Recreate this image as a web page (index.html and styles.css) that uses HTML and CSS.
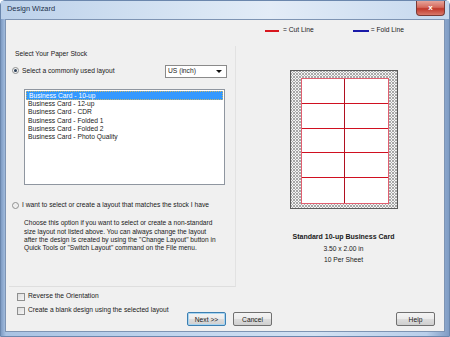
FILE: index.html
```html
<!DOCTYPE html>
<html>
<head>
<meta charset="utf-8">
<link rel="stylesheet" href="styles.css">
</head>
<body>
<div class="window">
  <div class="titlebar">
    <span class="title">Design Wizard</span>
    <span class="close">x</span>
  </div>
  <div class="client">
    <div class="legend">
      <span class="swatch red"></span><span class="ltext">= Cut Line</span>
      <span class="swatch blue"></span><span class="ltext">= Fold Line</span>
    </div>
    <div class="main">
      <div class="panel">
        <div class="heading">Select Your Paper Stock</div>
        <div class="row1">
          <label class="opt"><span class="radio on"></span>Select a commonly used layout</label>
          <div class="combo"><span>US (inch)</span><span class="arrow"></span></div>
        </div>
        <ul class="list">
          <li class="sel">Business Card - 10-up</li>
          <li>Business Card - 12-up</li>
          <li>Business Card - CDR</li>
          <li>Business Card - Folded 1</li>
          <li>Business Card - Folded 2</li>
          <li>Business Card - Photo Quality</li>
        </ul>
        <label class="opt opt2"><span class="radio"></span>I want to select or create a layout that matches the stock I have</label>
        <p class="desc">Choose this option if you want to select or create a non-standard size layout not listed above. You can always change the layout after the design is created by using the "Change Layout" button in Quick Tools or "Switch Layout" command on the File menu.</p>
      </div>
      <div class="preview">
        <div class="sheet">
          <div class="cards">
            <div></div><div></div><div></div><div></div><div></div>
            <div></div><div></div><div></div><div></div><div></div>
          </div>
        </div>
        <div class="cap">
          <div class="bold">Standard 10-up Business Card</div>
          <div>3.50 x 2.00 in</div>
          <div>10 Per Sheet</div>
        </div>
      </div>
    </div>
    <div class="bottom">
      <div class="checks">
        <label class="chk"><span class="box"></span>Reverse the Orientation</label>
        <label class="chk"><span class="box"></span>Create a blank design using the selected layout</label>
      </div>
      <div class="buttons">
        <button class="btn def">Next &gt;&gt;</button>
        <button class="btn">Cancel</button>
        <span class="spacer"></span>
        <button class="btn">Help</button>
      </div>
    </div>
  </div>
</div>
</body>
</html>
```
FILE: styles.css
```css
* { box-sizing: border-box; }
html, body { margin: 0; padding: 0; background: #ffffff; }
body {
  font-family: "Liberation Sans", Arial, sans-serif;
  font-size: 6.7px;
  line-height: 8.33px;
  color: #1a1a1a;
}
.window {
  width: 450px;
  height: 337px;
  display: flex;
  flex-direction: column;
  border-radius: 5px 5px 0 0;
  background: linear-gradient(90deg, #7f9cc4 0px, #a9c3e3 5px, #c2d6ee 40%, #d3e2f3 70%, #b9cfea 95%, #7f9cc4 100%);
  border: 1px solid #6b87ad;
}
.titlebar {
  height: 18px;
  flex: none;
  display: flex;
  align-items: flex-start;
  justify-content: space-between;
  padding-left: 6px;
  background: linear-gradient(90deg, #bcd1ea 0%, #d9e6f4 45%, #e3ecf7 60%, #c5d8ee 100%);
}
.title {
  margin-top: 4px;
  font-size: 7.4px;
  color: #1b2f4a;
}
.close {
  width: 29px;
  height: 15px;
  margin-right: 4px;
  border: 1px solid #7a3a35;
  border-top: none;
  border-radius: 0 0 4px 4px;
  background: linear-gradient(180deg, #e6a49a 0%, #d56a5d 45%, #c0382a 55%, #d8786a 100%);
  color: #ffffff;
  font-weight: bold;
  font-size: 8px;
  line-height: 13px;
  text-align: center;
}
.client {
  flex: 1;
  margin: 0 4px 4px 4px;
  background: #f0f0f0;
  border: 1px solid #7e94b3;
  display: flex;
  flex-direction: column;
  padding: 0 0 0 3px;
}
.legend {
  height: 20px;
  flex: none;
  display: flex;
  align-items: center;
  padding-left: 256px;
  padding-top: 1px;
  white-space: nowrap;
}
.swatch { display: inline-block; width: 14px; height: 2px; margin-right: 4px; flex: none; }
.swatch.red { background: #d8161e; }
.swatch.blue { background: #1a1aa8; width: 16px; margin-right: 2px; }
.ltext { margin-right: 39px; }
.main {
  display: flex;
  height: 247px;
  flex: none;
}
.panel {
  width: 227px;
  margin-top: 6px;
  border-right: 1px solid #e2e2e2;
  border-bottom: 1px solid #dedede;
  padding: 4px 0 0 3px;
}
.heading { height: 14px; padding-left: 3px; }
.row1 {
  display: flex;
  justify-content: space-between;
  align-items: center;
  height: 14px;
  padding-right: 8px;
}
.opt { display: flex; align-items: center; white-space: nowrap; }
.radio {
  width: 7px; height: 7px;
  border-radius: 50%;
  border: 1px solid #8e8f8f;
  background: radial-gradient(circle, #eaeaea 0%, #f8f8f8 100%);
  margin-right: 3px;
  display: inline-flex;
  align-items: center;
  justify-content: center;
  flex: none;
}
.radio.on::after {
  content: "";
  width: 3px; height: 3px; border-radius: 50%;
  background: #2b3f57;
}
.combo {
  width: 62px; height: 13px;
  border: 1px solid #8a8a8a;
  background: #ffffff;
  display: flex;
  align-items: center;
  justify-content: space-between;
  padding: 0 4px 0 2px;
}
.arrow {
  width: 0; height: 0;
  border-left: 3px solid transparent;
  border-right: 3px solid transparent;
  border-top: 3px solid #111;
}
.list {
  list-style: none;
  margin: 11px 0 0 12px;
  padding: 1px;
  width: 201px;
  height: 96px;
  background: #ffffff;
  border: 1px solid #8f96a0;
}
.list li { height: 8.33px; padding-left: 2px; white-space: nowrap; }
.list li.sel { background: #3399ff; color: #ffffff; border: 1px dotted #c7b56a; line-height: 7px; height: 9px; }
.opt2 { margin-top: 16px; }
.desc {
  margin: 10px 0 0 12px;
  width: 197px;
  font-size: 6.6px;
}
.preview {
  flex: 1;
  display: flex;
  flex-direction: column;
  align-items: center;
  padding-top: 30px;
  padding-left: 7px;
}
.sheet {
  width: 108px; height: 139px;
  border: 1px solid #5a5a5a;
  background-color: #f4f4f4;
  background-image:
    linear-gradient(45deg, transparent 38%, #a8a8a8 38%, #a8a8a8 62%, transparent 62%),
    linear-gradient(-45deg, transparent 38%, #a8a8a8 38%, #a8a8a8 62%, transparent 62%);
  background-size: 3px 3px;
  padding: 7px 9px 5px 10px;
}
.cards {
  width: 88px; height: 126px;
  border: 1px solid #e06070;
  background: #ffffff;
  display: grid;
  grid-template-columns: 1fr 1fr;
  grid-template-rows: repeat(5, 1fr);
  grid-auto-flow: column;
}
.cards div { border-bottom: 1px solid #d01020; }
.cards div:nth-child(-n+5) { border-right: 1px solid #b01020; }
.cards div:nth-child(5), .cards div:nth-child(10) { border-bottom: none; }
.cap { margin-top: 22px; text-align: center; line-height: 11.5px; }
.bold { font-weight: bold; font-size: 7px; }
.bottom {
  flex: 1;
  display: flex;
  padding: 5px 0 0 8px;
}
.checks { display: flex; flex-direction: column; gap: 5px; width: 170px; }
.chk { display: flex; align-items: center; height: 9px; white-space: nowrap; }
.box {
  width: 8px; height: 8px;
  border: 1px solid #8e8f8f;
  background: linear-gradient(135deg, #dcdcdc, #f6f6f6);
  margin-right: 3px;
}
.buttons {
  flex: 1;
  display: flex;
  align-items: flex-start;
  padding-top: 20px;
  padding-right: 9px;
}
.btn {
  font-family: inherit;
  font-size: 6.7px;
  height: 14px;
  width: 39px;
  padding: 0;
  margin-right: 7px;
  border: 1px solid #707070;
  border-radius: 2px;
  color: #1a1a1a;
  background: linear-gradient(180deg, #f4f4f4 0%, #ebebeb 50%, #dddddd 51%, #cfcfcf 100%);
}
.btn.def { border-color: #3c7fb1; box-shadow: inset 0 0 0 1px #a8d4f0; }
.spacer { flex: 1; }
.buttons .btn:last-child { margin-right: 0; }
```
